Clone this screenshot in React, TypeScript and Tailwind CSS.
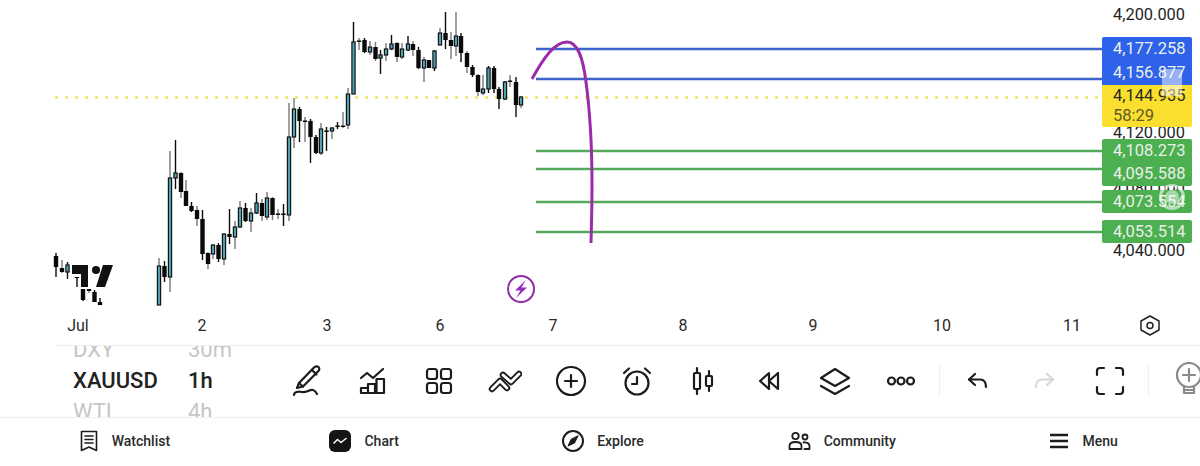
const font = { fontFamily: "Roboto, sans-serif" };

// x, wick top, wick bottom, body top, body bottom, up?, grey wick?
type Candle = [number, number, number, number, number, boolean, boolean?];

const candles: Candle[] = [
  [56, 253, 277, 256, 267, false],
  [62, 260, 273, 268, 272, false, true],
  [67.5, 262, 279, 265, 272, true],
  [77, 277, 287, 277, 278, false],
  [83, 289, 301, 289, 300, false],
  [89, 289, 293, 289, 291, false, true],
  [94.5, 290, 302, 292, 302, false],
  [100, 298, 305, 302, 305, false],
  [159, 258, 305, 266, 305, true, true],
  [164.5, 261, 282, 266, 277, false],
  [170, 151, 292, 178, 277, true, true],
  [175.5, 140, 189, 173, 178, true],
  [181, 172, 198, 173, 192, false, true],
  [186, 180, 206, 191, 206, false, true],
  [191.5, 202, 212, 206, 211, false],
  [197, 206, 226, 210, 219, false, true],
  [202.5, 210, 260, 219, 254, false],
  [208, 252, 269, 253, 264, false, true],
  [213, 244, 259, 245, 254, true, true],
  [218.5, 243, 262, 245, 259, false],
  [224, 233, 265, 234, 259, true, true],
  [229.5, 209, 244, 234, 237, false],
  [235, 221, 249, 227, 237, true, true],
  [240, 201, 228, 208, 227, true, true],
  [245.5, 203, 222, 208, 221, false],
  [251, 208, 232, 213, 221, true, true],
  [256.5, 193, 214, 203, 213, true],
  [262, 199, 221, 203, 216, false, true],
  [267, 192, 220, 198, 217, true, true],
  [272.5, 197, 220, 198, 215, false, true],
  [278, 209, 219, 213.5, 215, false, true],
  [283.5, 204, 226, 213.5, 215, false],
  [289, 103, 221, 137, 215, true, true],
  [294, 98, 148, 109, 137, true, true],
  [299.5, 107, 142, 109, 121, false],
  [305, 117, 142, 120.5, 122, false, true],
  [310.5, 119, 163, 121, 137, false],
  [316, 135, 154, 137, 153, false],
  [321, 123, 155, 129, 153, true, true],
  [326.5, 127, 151, 130.5, 132, false],
  [332, 127, 139, 128, 131, true, true],
  [337.5, 122, 129, 125.5, 127, false],
  [343, 112, 128, 125.5, 127, false, true],
  [348, 88, 129, 94, 125, true, true],
  [353.5, 22, 94, 42, 94, true],
  [359, 38, 50, 40.5, 42, false, true],
  [364.5, 38, 53, 40, 52, false],
  [370, 41, 55, 47, 52, true, true],
  [375.5, 42, 61, 47, 59, false, true],
  [380.5, 50, 74, 55, 58, true],
  [386, 43, 61, 49, 55, true, true],
  [391.5, 35, 50, 44, 49, true],
  [397, 42, 62, 43, 57, false, true],
  [402, 43, 59, 49, 57, true, true],
  [408, 36, 51, 44, 50, true],
  [413, 41, 56, 44, 50, false, true],
  [418.5, 47, 69, 50, 68, false],
  [424, 57, 82, 60, 68, true, true],
  [429, 60, 68, 60, 68, false],
  [434.5, 50, 71, 51, 68, true],
  [440, 28, 45, 33, 45, true, true],
  [445.5, 12, 49, 33, 40, false],
  [451, 32, 59, 40, 46, false, true],
  [456, 12, 56, 36, 46, true, true],
  [461, 33, 62, 36, 53, false],
  [467, 51, 73, 53, 67, false, true],
  [472.5, 65, 77, 67, 75, false],
  [478, 74, 96, 75, 92, false, true],
  [483, 75, 95, 89, 93, true, true],
  [488.5, 66, 93, 68, 89, true],
  [494, 66, 93, 68, 89, false],
  [499, 87, 109, 89, 99, false],
  [505, 81, 100, 82, 99, true],
  [510, 75, 87, 80.5, 82, false, true],
  [516, 77, 117, 82, 105, false],
  [521, 96, 108, 97, 105, true, true],
];

const priceTicks = [
  ["4,200.000", 14],
  ["4,120.000", 132],
  ["4,080.000", 188],
  ["4,040.000", 250],
] as const;

const timeTicks = [
  ["Jul", 78],
  ["2", 202],
  ["3", 327],
  ["6", 440],
  ["7", 553],
  ["8", 683],
  ["9", 813],
  ["10", 942],
  ["11", 1072],
] as const;

function Chart() {
  return (
    <svg width="1200" height="345" className="block" style={font}>
      <line x1="55" x2="1100" y1="97.500" y2="97.500" stroke="#f2e65e" strokeWidth="2.500" strokeDasharray="3 7" />
      {candles.map(([x, wt, wb, bt, bb, up, grey]) => (
        <g key={x}>
          <line x1={x} x2={x} y1={wt} y2={wb} stroke={grey ? "#777777" : "#0a0a0a"} strokeWidth="1.400" />
          {up ? (
            <rect x={x - 1.6} y={bt} width="3.200" height={bb - bt} fill="#4ba3b4" stroke="#141414" strokeWidth="1.200" />
          ) : (
            <rect x={x - 2.2} y={bt} width="4.400" height={bb - bt} fill="#0a0a0a" />
          )}
        </g>
      ))}
      <path d="M72 265H88V287H81V274H72Z" fill="#111" />
      <circle cx="96" cy="270" r="4" fill="#111" />
      <path d="M103 265H113L105 287H96Z" fill="#111" />

      {[49, 79].map((y) => (
        <line key={y} x1="536" x2="1102" y1={y} y2={y} stroke="#3d63cf" strokeWidth="2.600" />
      ))}
      {[151, 169, 202, 232].map((y) => (
        <line key={y} x1="536" x2="1102" y1={y} y2={y} stroke="#55a95b" strokeWidth="2.600" />
      ))}
      <path
        d="M532 79C544 57 555 42 567 42C578 42 583 58 586 82C590 112 592 150 592 185C592 205 591.500 225 591 243"
        fill="none"
        stroke="#9a2cab"
        strokeWidth="3"
      />

      <circle cx="521" cy="289" r="13" fill="none" stroke="#8e2ca5" strokeWidth="2" />
      <path d="M526 280L515 290.500H520.500L516 298L527 287.500H521.500Z" fill="#9a2cc0" />

      {priceTicks.map(([t, y]) => (
        <text key={t} x="1113" y={y + 6} fontSize="16.400" fill="#1f1f1f">
          {t}
        </text>
      ))}
      {timeTicks.map(([t, x]) => (
        <text key={t} x={x} y="331" fontSize="16" textAnchor="middle" fill="#2a2a2a">
          {t}
        </text>
      ))}
      <path d="M1150 316L1159 321V330L1150 335L1141 330V321Z" fill="none" stroke="#222" strokeWidth="1.500" strokeLinejoin="round" />
      <circle cx="1150" cy="325.500" r="3" fill="none" stroke="#222" strokeWidth="1.500" />
    </svg>
  );
}

function PriceLabels() {
  const text = "pl-[11px] leading-[23px] text-[16.5px]";
  return (
    <div className="absolute left-[1102px] top-[37px] w-[90px] flex flex-col text-[#eaf0e8]" style={font}>
      <div className={`${text} h-[24px] bg-[#2f62ea] rounded-t-[2px]`}>4,177.258</div>
      <div className={`${text} h-[24px] bg-[#2f62ea]`}>4,156.877</div>
      <div className="h-[42px] bg-[#fbdf2e] pl-[11px] pt-[1px] text-[16.5px] leading-[20px] text-[#2a2a1a] rounded-b-[2px]">
        <div>4,144.935</div>
        <div className="text-[#5f5a28]">58:29</div>
      </div>
      <div className={`${text} mt-[12px] h-[47px] bg-[#4caf50] rounded-[2px]`}>
        <div>4,108.273</div>
        <div>4,095.588</div>
      </div>
      <div className={`${text} mt-[4px] h-[23px] bg-[#4caf50] rounded-[2px]`}>4,073.554</div>
      <div className={`${text} mt-[7px] h-[23px] bg-[#4caf50] rounded-[2px]`}>4,053.514</div>
    </div>
  );
}

const ink = "#1c1c1c";

function Ic({ w = 32, h = 32, children, color = ink, sw = 2.200 }: { w?: number; h?: number; children: React.ReactNode; color?: string; sw?: number }) {
  return (
    <svg width={w} height={h} viewBox={`0 0 ${w} ${h}`} fill="none" stroke={color} strokeWidth={sw} strokeLinecap="round" strokeLinejoin="round">
      {children}
    </svg>
  );
}

const tools: React.ReactNode[] = [
  <Ic h={36}>
    <path d="M8 20L23 4.500C24.500 3 26.500 3 27.500 4C28.800 5.200 28.500 7 27.200 8.300L12 23.500L6 25Z" />
    <path d="M21 7L25.500 11.500M8 20L12 23.500" />
    <path d="M3 32C3 29 7 28 11 29C15 30 19 26 22 27C24 27.500 25 29 26 31" />
  </Ic>,
  <Ic>
    <path d="M4 13L10 8L16 13L26 4" />
    <path d="M4 28V23H11V28ZM11 28V19H18V28ZM19.500 28V14H27V28Z" />
  </Ic>,
  <Ic>
    <rect x="4" y="4" width="10" height="10" rx="2.500" />
    <rect x="18" y="4" width="10" height="10" rx="2.500" />
    <rect x="4" y="18" width="10" height="10" rx="2.500" />
    <rect x="18" y="18" width="10" height="10" rx="2.500" />
  </Ic>,
  <svg width="34" height="32" viewBox="0 0 34 32" fill="none" strokeLinecap="round" strokeLinejoin="round">
    <path d="M4 24L12 16L19 23" stroke={ink} strokeWidth="6.500" />
    <path d="M4 24L12 16L19 23" stroke="#fff" strokeWidth="2.800" />
    <path d="M15 10L23 17L31 9" stroke={ink} strokeWidth="6.500" />
    <path d="M15 10L23 17L31 9" stroke="#fff" strokeWidth="2.800" />
  </svg>,
  <Ic>
    <circle cx="16" cy="16" r="14" />
    <path d="M16 10V22M10 16H22" />
  </Ic>,
  <Ic>
    <circle cx="16" cy="18" r="11.500" />
    <path d="M16 12V19H11M3 8L8 3.500M29 8L24 3.500" />
  </Ic>,
  <Ic>
    <rect x="7" y="8" width="6" height="16" rx="1" />
    <rect x="19" y="11" width="6" height="10" rx="1" />
    <path d="M10 3V8M10 24V29M22 6V11M22 21V26" />
  </Ic>,
  <Ic>
    <path d="M16 8L7 16L16 24Z" />
    <path d="M25 8V24L16 16Z" />
  </Ic>,
  <Ic>
    <path d="M16 4L30 13L16 21L2 13Z" />
    <path d="M2 21L16 29L30 21" />
  </Ic>,
  <Ic>
    <circle cx="6.500" cy="16" r="3.500" />
    <circle cx="16" cy="16" r="3.500" />
    <circle cx="25.500" cy="16" r="3.500" />
  </Ic>,
];

const toolsRight: React.ReactNode[] = [
  <Ic>
    <path d="M13 9L7 14.500L13 20" />
    <path d="M7 14.500H18C22 14.500 24 17 24 22" />
  </Ic>,
  <Ic color="#d8d8d8">
    <path d="M19 9L25 14.500L19 20" />
    <path d="M25 14.500H14C10 14.500 8 17 8 22" />
  </Ic>,
  <Ic>
    <path d="M3 10V6C3 4 4 3 6 3H10M22 3H26C28 3 29 4 29 6V10M29 22V26C29 28 28 29 26 29H22M10 29H6C4 29 3 28 3 26V22" />
  </Ic>,
];

function Toolbar() {
  return (
    <div className="ml-[56px] h-[72px] pb-[2px] border-t border-[#eeeeee] flex items-center overflow-hidden" style={font}>
      <div className="w-[218px] pl-[17px] flex flex-col shrink-0">
        <div className="flex h-[31px] items-center text-[22px] text-[#c6c6c6]">
          <span className="w-[115px]">DXY</span>
          <span>30m</span>
        </div>
        <div className="flex h-[31px] items-center text-[22px] font-medium text-[#222222]">
          <span className="w-[115px]">XAUUSD</span>
          <span>1h</span>
        </div>
        <div className="flex h-[31px] items-center text-[22px] text-[#c6c6c6]">
          <span className="w-[115px]">WTI</span>
          <span>4h</span>
        </div>
      </div>
      {tools.map((t, i) => (
        <div key={i} className="w-[66px] shrink-0 flex justify-center">
          {t}
        </div>
      ))}
      <div className="ml-[5px] w-px h-[32px] bg-[#eeeeee] shrink-0" />
      {toolsRight.map((t, i) => (
        <div key={i} className={`w-[66px] shrink-0 flex justify-center ${i === 0 ? "ml-[5px]" : ""}`}>
          {t}
        </div>
      ))}
      <div className="ml-[5px] w-px h-[32px] bg-[#eeeeee] shrink-0" />
      <div className="ml-[24px] shrink-0 -mt-[4px]">
        <Ic h={34} color="#8a8a8a">
          <circle cx="16" cy="13" r="12" />
          <path d="M16 7V19M10 13H22M11 24V31H21V24M11 28H21" />
        </Ic>
      </div>
    </div>
  );
}

const navItems: { label: string; icon: React.ReactNode; nudge: string }[] = [
  {
    label: "Watchlist",
    nudge: "pr-[2px]",
    icon: (
      <Ic w={20} h={22} sw={1.600}>
        <path d="M2.500 1.500H17.500V20.500L10 17L2.500 20.500Z" />
        <path d="M6 6H14M6 9.500H14M6 13H14" />
      </Ic>
    ),
  },
  {
    label: "Chart",
    nudge: "",
    icon: (
      <div className="w-[22px] h-[22px] rounded-[6px] bg-[#141414] flex items-center justify-center">
        <svg width="14" height="10" viewBox="0 0 14 10" fill="none" stroke="#fff" strokeWidth="1.500" strokeLinecap="round" strokeLinejoin="round">
          <path d="M1 7L4.500 3.500L8 6.500L13 2.500" />
        </svg>
      </div>
    ),
  },
  {
    label: "Explore",
    nudge: "",
    icon: (
      <Ic w={22} h={22} sw={2}>
        <circle cx="11" cy="11" r="10" />
        <path d="M16 6L12.500 13L6 16L9 9.500Z" fill={ink} stroke={ink} strokeWidth="1" />
      </Ic>
    ),
  },
  {
    label: "Community",
    nudge: "",
    icon: (
      <Ic w={23} h={20} sw={1.800}>
        <circle cx="7.500" cy="5" r="3.200" />
        <circle cx="17" cy="6" r="2.500" />
        <path d="M1.500 18V15C1.500 12.500 4 11 7.500 11C11 11 13.500 12.500 13.500 15V18Z" />
        <path d="M15.500 11.500C19 11 21.500 12.500 21.500 15V18H16.500" />
      </Ic>
    ),
  },
  {
    label: "Menu",
    nudge: "pl-[6px]",
    icon: (
      <Ic w={20} h={18} sw={2.400}>
        <path d="M1 3H19M1 9H19M1 15H19" strokeLinecap="butt" />
      </Ic>
    ),
  },
];

function BottomNav() {
  return (
    <nav className="h-[49px] border-t border-[#eeeeee] grid grid-cols-5 pl-[6px]" style={font}>
      {navItems.map((n) => (
        <div key={n.label} className={`flex items-center justify-center gap-[13px] pb-[2px] text-[14px] font-medium text-[#2a2a2a] ${n.nudge}`}>
          {n.icon}
          <span>{n.label}</span>
        </div>
      ))}
    </nav>
  );
}

export default function App() {
  return (
    <div className="w-[1200px] h-[466px] bg-white overflow-hidden">
      <div className="relative h-[345px]">
        <Chart />
        <PriceLabels />
        <div className="absolute left-[1162px] top-[69px] w-[20px] h-[27px] rounded-[2px] bg-white/50" />
        <div className="absolute left-[1159px] top-[184px] w-[26px] h-[26px] rounded-full border-[3px] border-white/60 flex items-center justify-center">
          <div className="w-[14px] h-[14px] rounded-full bg-white/50" />
        </div>
      </div>
      <Toolbar />
      <BottomNav />
    </div>
  );
}
